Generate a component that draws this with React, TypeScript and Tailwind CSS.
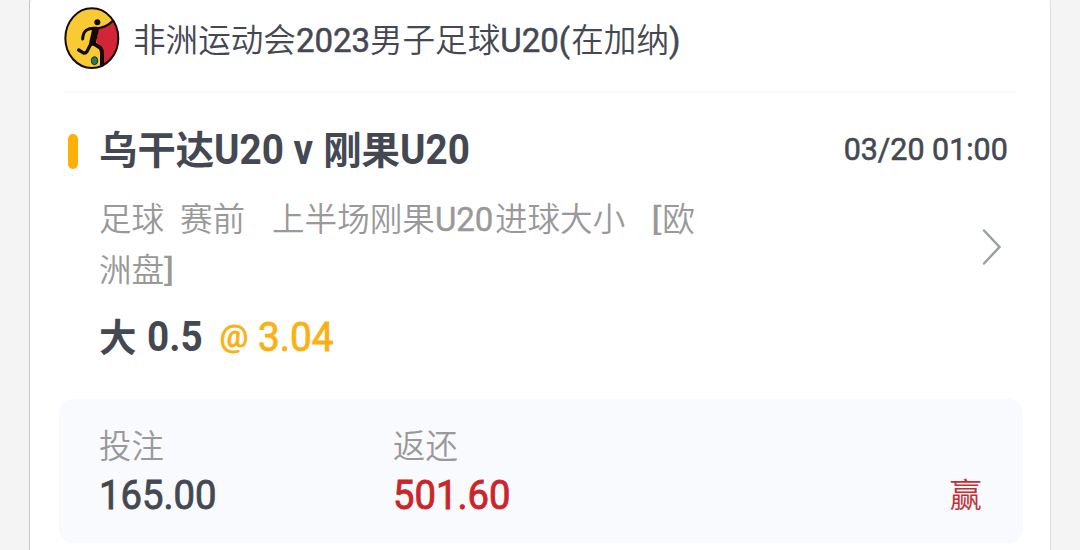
import type { ReactNode } from 'react'
import clsx from 'clsx'

interface LatinProps {
  className?: string
  children: ReactNode
}

// Condensed latin/digit run set beside the Chinese text
function Latin({ className, children }: LatinProps) {
  return (
    <span className={clsx('inline-block shrink-0 origin-left whitespace-pre font-[Roboto,sans-serif]', className)}>
      {children}
    </span>
  )
}

function LeagueLogo() {
  return (
    <svg viewBox="27 22 168 189" className="h-[63px] w-14 shrink-0" fill="none">
      <defs>
        <clipPath id="badge">
          <ellipse cx="110.5" cy="115.5" rx="80" ry="90" />
        </clipPath>
      </defs>
      <ellipse cx="110.5" cy="115.5" rx="80" ry="90" fill="#f8cb35" />
      <path d="M178 58 L152 79 L130 88 L124 128 L142 146 L147 210 H200 V58 Z" fill="#d32537" clipPath="url(#badge)" />
      <ellipse cx="110.5" cy="115.5" rx="79.5" ry="89.5" stroke="#120a0a" strokeWidth="6" />
      <g stroke="#120a0a" strokeLinecap="round" strokeLinejoin="round">
        <path d="M172 65 C160 78 147 83 128 86" strokeWidth="7" />
        <path d="M124 86 C99 83 84 93 83 118" strokeWidth="9" />
        <path d="M121 92 L113 128" strokeWidth="20" />
        <path d="M114 130 L134 143 Q142 150 141 166 L141 195" strokeWidth="12" />
        <path d="M109 130 L95 157 Q91 162 84 159 L71 151" strokeWidth="10" />
      </g>
      <circle cx="127" cy="67.5" r="9" fill="#120a0a" />
      <ellipse cx="118.5" cy="183" rx="9.5" ry="12" fill="#2c7a50" stroke="#1b2c20" strokeWidth="3" />
    </svg>
  )
}

interface AmountProps {
  label: string
  value: string
  className: string
}

function Amount({ label, value, className }: AmountProps) {
  return (
    <div className="w-[294px]">
      <div className="h-[47px] text-[32.4px] leading-[47px] font-[350] text-[#999999]">{label}</div>
      <div className={clsx('h-[50px] text-[40px] leading-[50px] font-normal', className)}>
        <Latin className="scale-x-[0.955] [-webkit-text-stroke:0.9px]">{value}</Latin>
      </div>
    </div>
  )
}

export default function App() {
  return (
    <div className="h-[550px] w-[1080px] overflow-hidden bg-[#f4f4f4] font-['Noto_Sans_CJK_SC',sans-serif] text-[#444852]">
      <div className="-mt-2.5 ml-[29px] h-[600px] w-[1022px] rounded-[14px] border border-r-[#dcdee0] border-l-[#c3c9cd] bg-white pt-2.5">
        <header className="mr-[34px] ml-[34px] flex h-[92px] border-b-2 border-[#f9f9f9] pt-[6px]">
          <LeagueLogo />
          <div className="ml-[13px] flex h-[62px] items-baseline text-[32.6px] leading-[61px] font-[350]">
            <span>非洲运动会</span>
            <Latin className="w-[74px] text-[33px] font-normal [-webkit-text-stroke:0.5px]">2023</Latin>
            <span>男子足球</span>
            <Latin className="w-[71px] text-[33px] font-normal [-webkit-text-stroke:0.5px]">U20(</Latin>
            <span>在加纳</span>
            <Latin className="text-[33px] font-normal [-webkit-text-stroke:0.5px]">)</Latin>
          </div>
        </header>

        <div className="mr-[42px] ml-[38px] flex h-[92px] items-center pt-[26px]">
          <span className="mb-[2px] h-[35px] w-[10px] rounded-full bg-[#ffb007]" />
          <h1 className="mb-[10px] ml-[21px] flex h-[60px] items-baseline text-[38.4px] leading-[60px] font-bold">
            <span>乌干达</span>
            <Latin className="w-[109px] scale-x-[0.92] text-[42px]">U20 v </Latin>
            <span>刚果</span>
            <Latin className="scale-x-[0.92] text-[42px]">U20</Latin>
          </h1>
          <Latin className="mb-[7px] ml-auto origin-right scale-x-[0.95] text-[32px] font-normal [-webkit-text-stroke:0.6px]">03/20 01:00</Latin>
        </div>

        <div className="mr-[48px] ml-[69px] flex h-[117px] items-center justify-between">
          <div className="mb-[3px] text-[32.6px] leading-[51px] font-[350] text-[#999999]">
            <div className="flex h-[51px] items-baseline">
              <span className="w-[81px]">足球</span>
              <span className="w-[92px]">赛前</span>
              <span>上半场刚果</span>
              <Latin className="w-[60px] text-[33px] font-normal [-webkit-text-stroke:0.4px]">U20</Latin>
              <span>进球大小</span>
              <Latin className="relative -top-px ml-[26px] w-[11px] scale-x-125 text-[32px] font-normal">[</Latin>
              <span>欧</span>
            </div>
            <div className="flex h-[51px] items-baseline">
              <span>洲盘</span>
              <Latin className="relative -top-px scale-x-125 text-[32px] font-normal">]</Latin>
            </div>
          </div>
          <svg viewBox="0 0 20 38" className="mt-[7px] h-[38px] w-5" fill="none" stroke="#9aa0a9" strokeWidth="2.5">
            <path d="M2 2.5 L17.5 19 L2 35.5" strokeLinecap="round" />
          </svg>
        </div>

        <div className="ml-[69px] flex h-[60px] items-baseline pt-[3px] text-[37.5px] leading-[60px] font-bold">
          <span>大</span>
          <Latin className="ml-[10px] w-[73px] scale-x-[0.92] text-[42px]">0.5</Latin>
          <Latin className="relative -top-1 w-[38px] text-[32px] font-normal text-[#fbb016] [-webkit-text-stroke:0.9px]">@</Latin>
          <Latin className="scale-x-[0.97] text-[40px] font-normal text-[#fbb016] [-webkit-text-stroke:0.8px]">3.04</Latin>
        </div>

        <div className="mt-[37px] ml-[29px] flex h-[144px] w-[964px] rounded-[14px] bg-[#f9fafe] pt-[21px] pl-[40px]">
          <Amount label="投注" value="165.00" className="text-[#444852]" />
          <Amount label="返还" value="501.60" className="text-[#cc2529]" />
          <div className="mt-[48px] mr-[41px] ml-auto text-[32.4px] leading-[50px] font-[350] text-[#c62d33]">赢</div>
        </div>
      </div>
    </div>
  )
}
